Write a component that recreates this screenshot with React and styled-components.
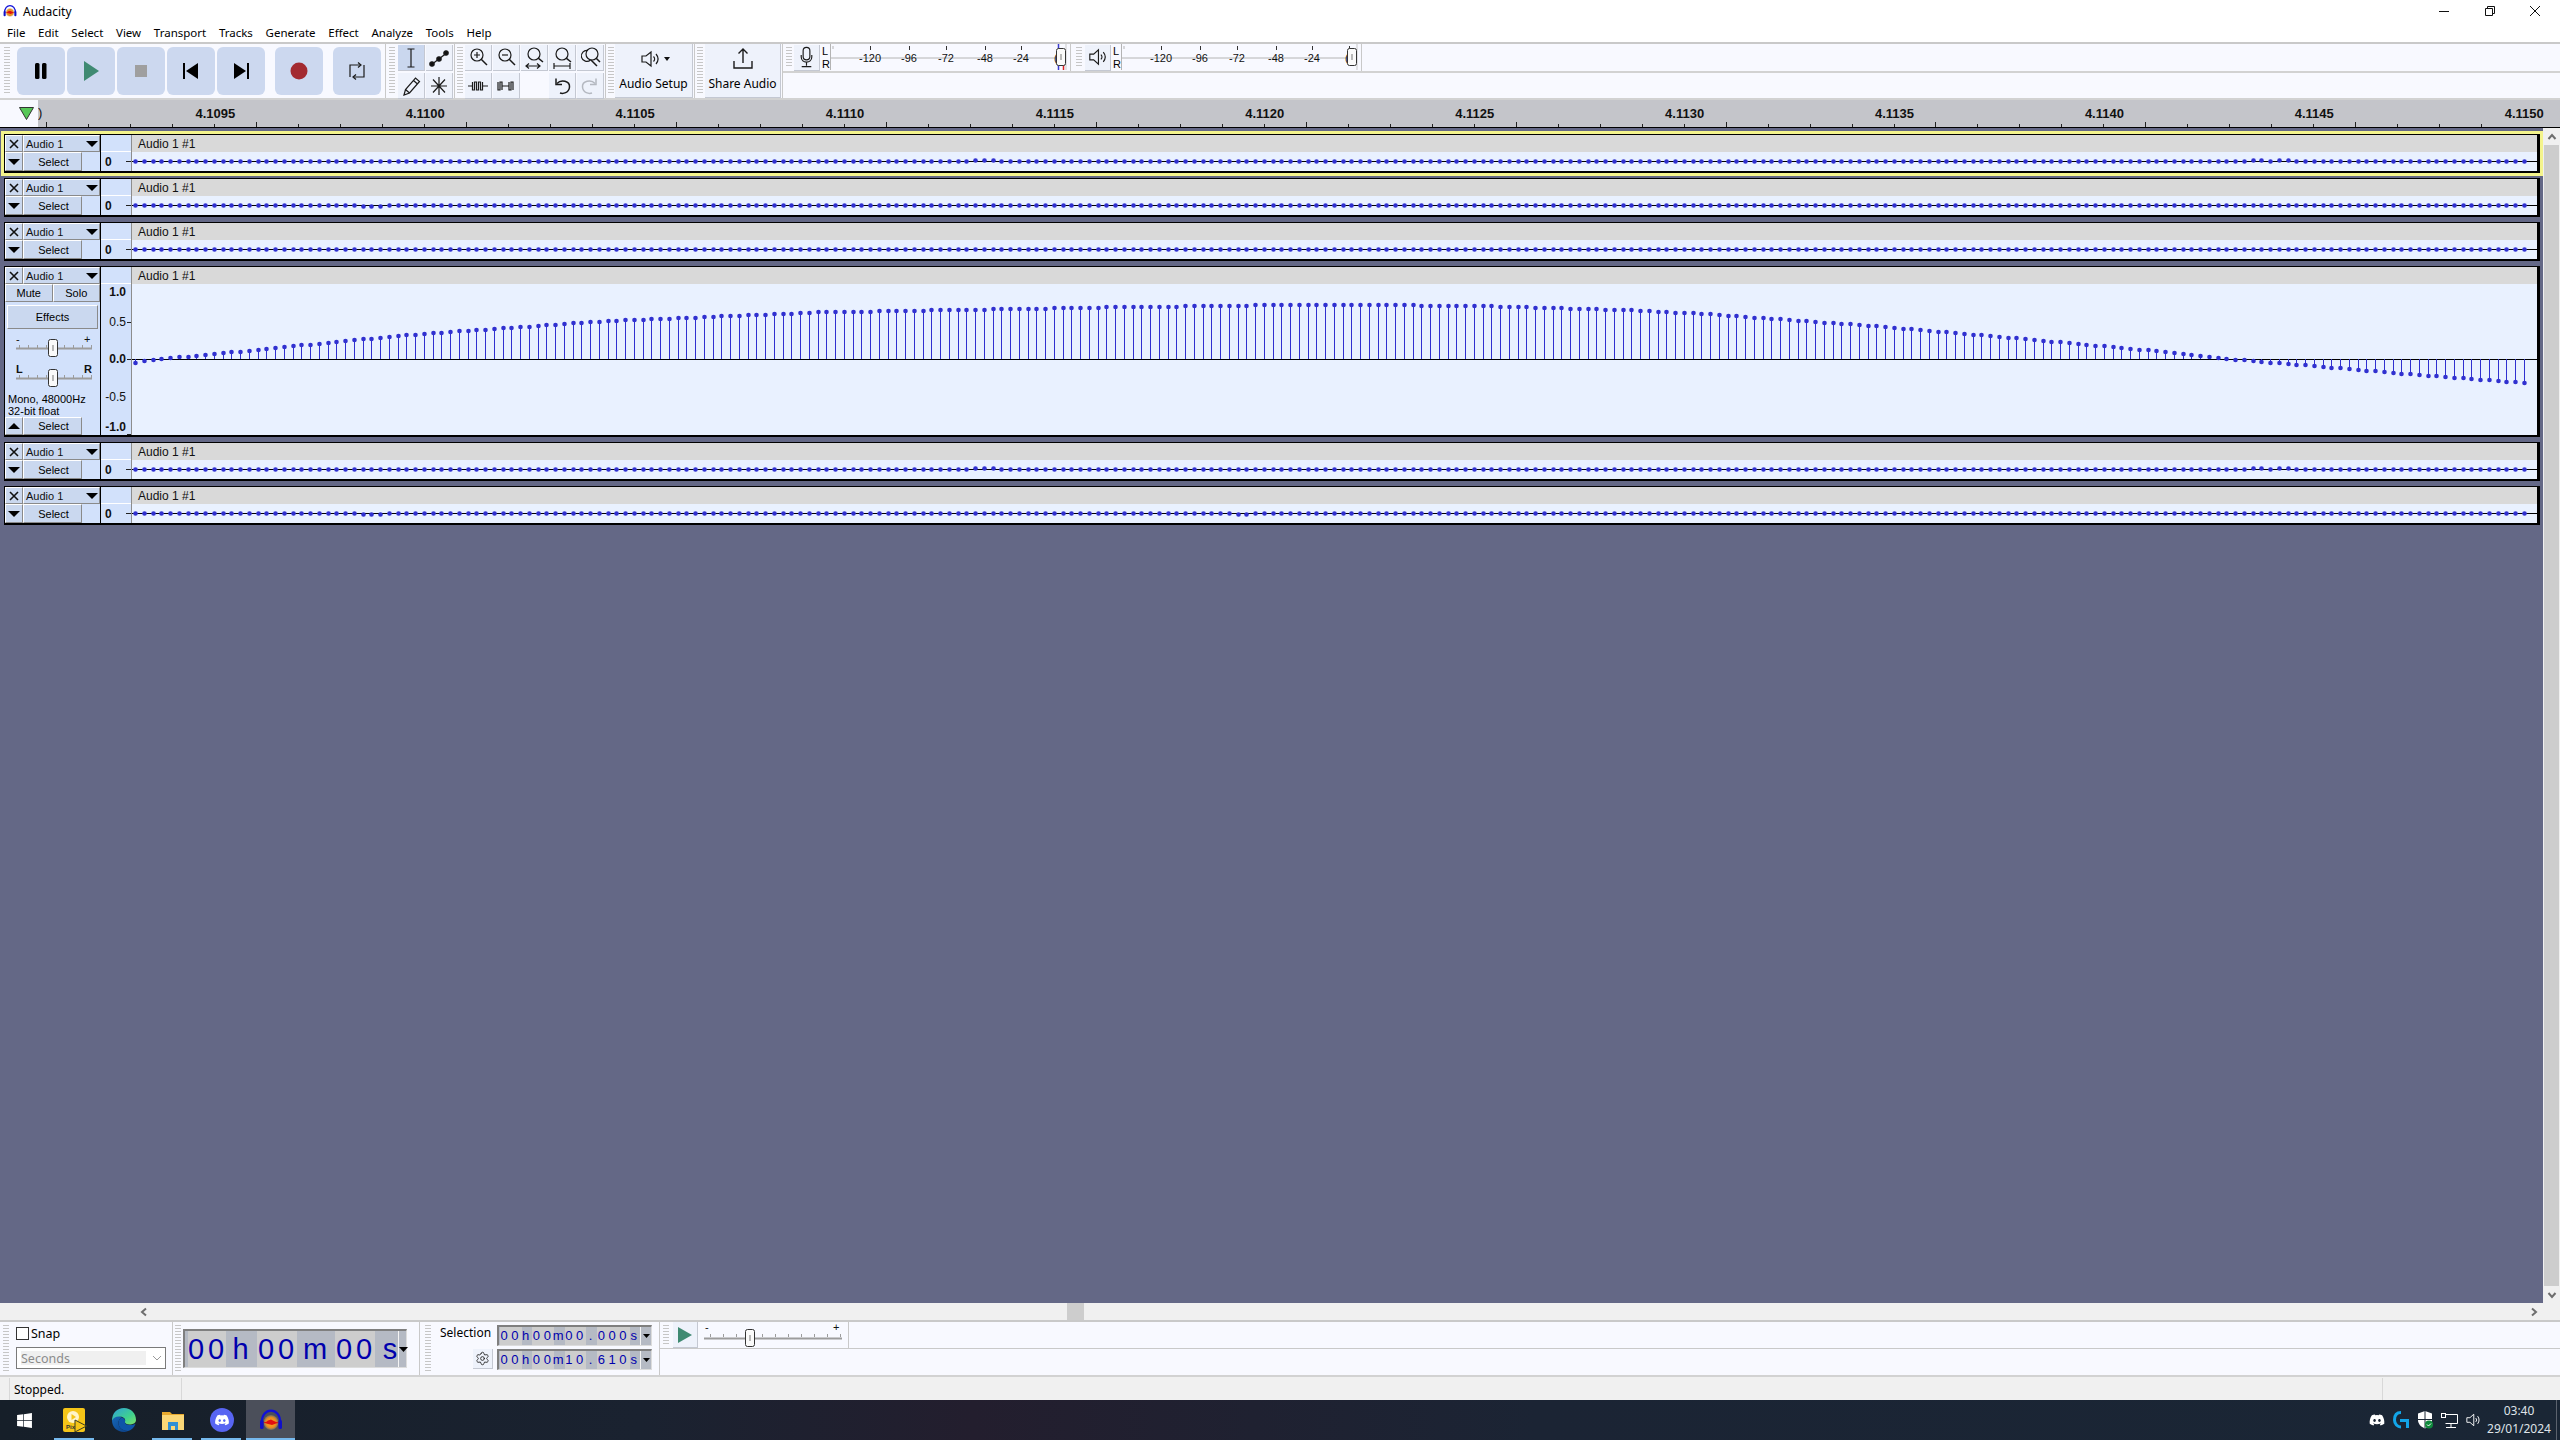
import React from "react";
import styled, { createGlobalStyle, css } from "styled-components";
import { FaDiscord, FaWindows } from "react-icons/fa";
import { Settings } from "lucide-react";

const UI_FONT = `"Noto Sans", "Open Sans", sans-serif`;
const PANEL_FONT = `"Liberation Sans", Arial, sans-serif`;
const DOCK_BG = "#f8f9ff";
const LINE = "#c9c9c9";

/* waveform: sample spacing is 8.75px, amplitude is read off the reference */
const FIRST_SAMPLE = 135;
const SAMPLE_STEP = 8.75;
const SAMPLE_COUNT = 274;
const WAVE_LEFT = 132;
const CURVE = [
  [135, -3], [158, 0], [240, 8], [330, 17], [415, 25], [600, 38], [816, 47],
  [1104, 52], [1330, 55], [1500, 53], [1636, 49], [1712, 45], [1865, 34],
  [2018, 21], [2171, 7], [2232, 0], [2294, -5], [2400, -14], [2530, -24],
];

function ampAt(x) {
  for (let i = 1; i < CURVE.length; i++) {
    if (x <= CURVE[i][0]) {
      const [x0, y0] = CURVE[i - 1];
      const [x1, y1] = CURVE[i];
      return y0 + ((y1 - y0) * (x - x0)) / (x1 - x0);
    }
  }
  return CURVE[CURVE.length - 1][1];
}

const SAMPLES = Array.from({ length: SAMPLE_COUNT }, (_, i) => FIRST_SAMPLE + i * SAMPLE_STEP);

const TRACKS = [
  { id: 1, selected: true, bumps: [[975, 1000, -1], [2248, 2262, -1], [2275, 2290, -1]] },
  { id: 2, bumps: [[360, 385, 1]] },
  { id: 3, bumps: [] },
  { id: 4, expanded: true },
  { id: 5, bumps: [[975, 1000, -1], [2248, 2262, -1], [2275, 2290, -1]] },
  { id: 6, bumps: [[360, 385, 1], [1230, 1250, 1]] },
];

const RULER_LABELS = ["4.1095", "4.1100", "4.1105", "4.1110", "4.1115", "4.1120", "4.1125", "4.1130", "4.1135", "4.1140", "4.1145", "4.1150"];

const MENUS = ["File", "Edit", "Select", "View", "Transport", "Tracks", "Generate", "Effect", "Analyze", "Tools", "Help"];

const BIG_TIME = [
  { text: "00", width: 38, light: true }, { text: "h", width: 31 },
  { text: "00", width: 40, light: true }, { text: "m", width: 38 },
  { text: "00", width: 40, light: true }, { text: "s", width: 23, shift: 9 },
];

const smallTime = (sec, frac) => [
  { text: "00", width: 21.6, light: true }, { text: "h", width: 10.8 },
  { text: "00", width: 21.6, light: true }, { text: "m", width: 10.8 },
  { text: sec, width: 21.6, light: true }, { text: ".", width: 10.8 },
  { text: frac, width: 32.4, light: true }, { text: "s", width: 10.8 },
];

const GlobalStyle = createGlobalStyle`
  html, body { margin: 0; padding: 0; background: #fff; }
  #root { width: 2560px; height: 1440px; }
`;

const Window = styled.div`
  width: 2560px;
  height: 1440px;
  display: flex;
  flex-direction: column;
  overflow: hidden;
  font-family: ${UI_FONT};
  color: #000;
`;

/* ---------- title + menu ---------- */
const TitleBar = styled.div`
  height: 22px;
  display: flex;
  align-items: center;
  padding: 0 2px 0 3px;
  background: #fff;
  font-size: 12px;
`;
const TitleText = styled.span`
  margin-left: 6px;
  flex: 1;
`;
const WinButton = styled.div`
  width: 45.5px;
  height: 22px;
  display: flex;
  align-items: center;
  justify-content: center;
`;
const MenuBar = styled.div`
  height: 20px;
  display: flex;
  align-items: center;
  padding-left: 7px;
  gap: 12.7px;
  background: #fff;
  font-size: 11.5px;
`;

/* ---------- top dock ---------- */
const Dock = styled.div`
  height: 58px;
  box-sizing: border-box;
  display: flex;
  background: ${DOCK_BG};
  border-top: 2px solid ${LINE};
  border-bottom: 2px solid #d2d2d2;
`;
const Section = styled.div`
  display: flex;
  align-items: ${(p) => p.$align || "center"};
  width: ${(p) => p.$width}px;
  box-sizing: border-box;
  padding-left: ${(p) => p.$pad ?? 2}px;
  border-right: 1px solid ${LINE};
`;
const Gripper = styled.div`
  width: 6px;
  flex: none;
  align-self: stretch;
  margin: 3px ${(p) => p.$after ?? 3}px 3px 0;
  background: repeating-linear-gradient(to bottom, #c6c6c6 0 1px, transparent 1px 3px);
`;
const TransportRow = styled.div`
  display: flex;
  gap: 2px;
`;
const TransportButton = styled.div`
  width: 48px;
  height: 48px;
  border-radius: 6px;
  background: #ccd8ef;
  display: flex;
  align-items: center;
  justify-content: center;
  margin-left: ${(p) => p.$gap || 0}px;
`;
const ToolGrid = styled.div`
  display: grid;
  grid-template-columns: repeat(${(p) => p.$cols}, 27px);
  grid-auto-rows: 26px;
  gap: 2px 1px;
  margin-top: 2px;
`;
const toolFace = css`
  box-sizing: border-box;
  background: #eef2fb;
  border-right: 1px solid #c4c8d2;
  border-bottom: 1px solid #c4c8d2;
  display: flex;
  align-items: center;
  justify-content: center;
`;
const ToolButton = styled.div`
  ${toolFace}
  ${(p) => p.$on && `background: #cad7ee;`}
  ${(p) => p.$blank && `background: transparent; border: none;`}
`;
const BigButton = styled.div`
  ${toolFace}
  width: ${(p) => p.$width}px;
  height: 54px;
  flex-direction: column;
  justify-content: flex-start;
  font-size: 12px;
  line-height: 16px;
  svg { margin-top: 2px; margin-bottom: 4px; }
`;
const RightDock = styled.div`
  flex: 1;
  display: flex;
  flex-direction: column;
`;
const MeterRow = styled.div`
  height: 27px;
  display: flex;
  border-bottom: 2px solid #d2d2d2;
  box-sizing: content-box;
`;
const MeterButton = styled(ToolButton)`
  width: 26px;
  height: 26px;
  flex: none;
`;
const ChannelLabels = styled.div`
  width: 11px;
  margin-left: 1px;
  display: flex;
  flex-direction: column;
  font: 11px/13px ${PANEL_FONT};
  padding-left: 1px;
  box-sizing: border-box;
`;
const Drawing = styled.svg`
  display: block;
  flex: none;
  text {
    font-family: ${PANEL_FONT};
    font-size: ${(p) => p.$text || 11}px;
  }
`;

/* ---------- ruler ---------- */
const Ruler = styled.div`
  height: 28px;
  box-sizing: border-box;
  display: flex;
  background: #c4c5ca;
  border-bottom: 1px solid #000;
`;
const RulerHead = styled.div`
  width: 38px;
  flex: none;
  background: ${DOCK_BG};
  display: flex;
  align-items: flex-start;
  padding: 7px 0 0 19px;
  box-sizing: border-box;
`;
const RulerAxis = styled(Drawing)`
  text {
    font-weight: 700;
    font-size: 13px;
  }
`;

/* ---------- tracks ---------- */
const TrackArea = styled.div`
  flex: 1;
  display: flex;
  min-height: 0;
  background: #646886;
`;
const TrackList = styled.div`
  flex: 1;
  display: flex;
  flex-direction: column;
  gap: 5px;
  padding: 6px 3px 0 4px;
`;
const TrackFrame = styled.div`
  height: ${(p) => (p.$expanded ? 171 : 39)}px;
  box-sizing: border-box;
  border-style: solid;
  border-color: #000;
  border-width: 1px 3px 2px 1px;
  display: grid;
  grid-template-columns: 96px 31px 1fr;
  flex: none;
  ${(p) => p.$selected && `box-shadow: 0 0 0 3px #f4f48c;`}
`;
const Panel = styled.div`
  display: flex;
  flex-direction: column;
  background: #d2e1fb;
  border-right: 1px solid #000;
  font: 11px ${PANEL_FONT};
`;
const PanelRow = styled.div`
  display: flex;
  height: ${(p) => p.$h}px;
  flex: none;
`;
const bevel = css`
  box-sizing: border-box;
  background: #cad8ef;
  border: 1px solid;
  border-color: #fff #8a8a8a #8a8a8a #fff;
  display: flex;
  align-items: center;
  justify-content: center;
`;
const SquareButton = styled.div`
  ${bevel}
  width: 18px;
`;
const NameButton = styled.div`
  ${bevel}
  flex: 1;
  justify-content: space-between;
  padding: 0 1px 0 2px;
  color: #111;
`;
const SelectButton = styled.div`
  ${bevel}
  width: 59px;
  padding-left: 2px;
`;
const HalfButton = styled.div`
  ${bevel}
  flex: 1;
`;
const EffectsButton = styled.div`
  ${bevel}
  height: 24px;
  margin: 3px 2px 4px;
`;
const Info = styled.div`
  height: 24px;
  flex: none;
  padding-left: 3px;
  line-height: 12px;
`;
const Grow = styled.div`
  flex: 1;
`;
const ScaleColumn = styled.div`
  display: flex;
  flex-direction: column;
  background: #d2e1fb;
  border-right: 1px solid #8d8d8d;
`;
const ScaleTop = styled.div`
  height: 17px;
  flex: none;
  box-sizing: border-box;
  border-bottom: 1px solid #fff;
`;
const WaveColumn = styled.div`
  display: flex;
  flex-direction: column;
  background: #e9f1ff;
  min-width: 0;
`;
const ClipName = styled.div`
  height: 17px;
  flex: none;
  background: #d9d9d9;
  font: 12px/19px ${PANEL_FONT};
  padding-left: 6px;
  color: #111;
`;

/* ---------- scrollbars ---------- */
const VScroll = styled.div`
  width: 17px;
  flex: none;
  background: #f0f0f0;
  display: flex;
  flex-direction: column;
  align-items: center;
`;
const ArrowSlot = styled.div`
  height: 17px;
  display: flex;
  align-items: center;
  justify-content: center;
  flex: none;
`;
const VThumb = styled.div`
  flex: 1;
  width: 15px;
  background: #cdcdcd;
`;
const HScroll = styled.div`
  height: 17px;
  flex: none;
  background: #f0f0f0;
  display: flex;
  align-items: center;
  padding: 0 21px 0 139px;
`;
const HThumb = styled.div`
  width: 17px;
  height: 17px;
  background: #cdcdcd;
  margin: 0 auto 0 918px;
`;

/* ---------- bottom dock ---------- */
const BottomDock = styled.div`
  height: 57px;
  flex: none;
  box-sizing: border-box;
  display: flex;
  background: ${DOCK_BG};
  border-top: 2px solid ${LINE};
  border-bottom: 2px solid #d2d2d2;
`;
const SnapColumn = styled.div`
  flex: 1;
  display: flex;
  flex-direction: column;
  padding-left: 7px;
  gap: 7px;
  font-size: 12.5px;
`;
const SnapLine = styled.label`
  display: flex;
  align-items: center;
  height: 13px;
  margin-top: 5px;
  gap: 2px;
`;
const CheckBox = styled.span`
  width: 13px;
  height: 13px;
  box-sizing: border-box;
  background: #fff;
  border: 1px solid #333;
`;
const SelectBox = styled.div`
  width: 150px;
  height: 22px;
  box-sizing: border-box;
  background: #fff;
  border: 1px solid #7a7a7a;
  padding: 3px 0 3px 4px;
  display: flex;
  align-items: center;
  gap: 5px;
`;
const SelectValue = styled.div`
  width: 125px;
  height: 100%;
  background: #f0f0f0;
  color: #8b8b8b;
  font-size: 12.5px;
  line-height: 15px;
`;
const TimeField = styled.div`
  box-sizing: border-box;
  display: flex;
  width: ${(p) => p.$width}px;
  height: ${(p) => p.$height}px;
  background: #b5bac4;
  padding-left: ${(p) => p.$inset}px;
  border-style: solid;
  border-width: 2px 1px 1px 2px;
  border-color: #7f7f7f #dcdcdc #dcdcdc #7f7f7f;
  color: #0000ad;
  font-family: ${PANEL_FONT};
  font-size: ${(p) => p.$size}px;
  letter-spacing: ${(p) => p.$track}px;
`;
const TimeSegment = styled.span`
  flex: none;
  box-sizing: border-box;
  display: flex;
  align-items: center;
  justify-content: center;
  width: ${(p) => p.$width}px;
  padding-left: ${(p) => p.$shift || 0}px;
  background: ${(p) => (p.$light ? "#cdcdcd" : "transparent")};
  text-indent: ${(p) => p.$indent}px;
`;
const TimeDrop = styled.span`
  flex: 1;
  border-left: 1px solid #f4f4f4;
  display: flex;
  align-items: center;
  justify-content: center;
`;
const SelectionGrid = styled.div`
  display: grid;
  grid-template-columns: 58px auto;
  justify-items: end;
  align-items: center;
  row-gap: 3px;
  margin-bottom: 3px;
  font-size: 12px;
`;
const SelectionLabel = styled.span`
  justify-self: start;
  align-self: start;
  margin: -1px 0 0 1px;
`;
const GearButton = styled.div`
  ${toolFace}
  width: 20px;
  height: 20px;
  margin-right: 4px;
`;
const RightBottom = styled.div`
  flex: 1;
  display: flex;
  flex-direction: column;
`;
const SpeedRow = styled.div`
  height: 26px;
  display: flex;
  box-sizing: content-box;
  border-bottom: 1px solid ${LINE};
`;
const SpeedPlay = styled(ToolButton)`
  width: 25px;
  height: 26px;
  margin-right: 6px;
`;

/* ---------- status + taskbar ---------- */
const StatusBar = styled.div`
  height: 23px;
  flex: none;
  background: #f0f0f0;
  display: flex;
  font-size: 12px;
  line-height: 23px;
  padding-left: 9px;
`;
const StatusCell = styled.div`
  box-sizing: border-box;
  border-left: 1px solid #d8d8d8;
  padding-left: 4px;
  width: ${(p) => p.$width}px;
  margin: 1px 0 0;
`;
const Taskbar = styled.div`
  height: 40px;
  flex: none;
  display: flex;
  align-items: stretch;
  background: linear-gradient(90deg, #161f29 0%, #1a2230 25%, #231e2e 38%, #1b2434 60%, #1a2635 100%);
`;
const StartButton = styled.div`
  width: 50px;
  padding-right: 2px;
  box-sizing: border-box;
  display: flex;
  align-items: center;
  justify-content: center;
  color: #fff;
`;
const TaskButton = styled.div`
  width: 49px;
  position: relative;
  display: flex;
  align-items: center;
  justify-content: center;
  ${(p) => p.$active && `background: #4b4f5a;`}
  ${(p) =>
    p.$running &&
    css`
      &::after {
        content: "";
        position: absolute;
        bottom: 0;
        height: 2px;
        left: ${p.$active ? 0 : 4}px;
        right: ${p.$active ? 0 : 5}px;
        background: #76b9ed;
      }
    `}
`;
const Tray = styled.div`
  margin-left: auto;
  display: flex;
  align-items: center;
  padding-right: 3px;
`;
const TrayIcon = styled.div`
  width: 24px;
  display: flex;
  align-items: center;
  justify-content: center;
  color: #fff;
`;
const Clock = styled.div`
  width: 68px;
  text-align: center;
  color: #dfe3e8;
  font-size: 12px;
  line-height: 18px;
`;
const DesktopEdge = styled.div`
  width: 1px;
  height: 40px;
  background: #5b626d;
  margin-left: 3px;
`;

/* ---------- drawings ---------- */
function Ink({ size = 26, w, h, children, fill = "none", stroke = "#1a1a1a", sw = 1.2, vb }) {
  return (
    <svg
      width={w || size}
      height={h || size}
      viewBox={vb || `0 0 ${w || size} ${h || size}`}
      fill={fill}
      stroke={stroke}
      strokeWidth={sw}
    >
      {children}
    </svg>
  );
}

function AudacityLogo({ size }) {
  return (
    <svg width={size} height={size} viewBox="0 0 24 24">
      <defs>
        <radialGradient id={`aud${size}`} cx="50%" cy="50%" r="50%">
          <stop offset="0%" stopColor="#ffb020" />
          <stop offset="70%" stopColor="#e88a20" />
          <stop offset="100%" stopColor="#c0a060" stopOpacity="0.3" />
        </radialGradient>
      </defs>
      <ellipse cx="12" cy="14.5" rx="7.5" ry="7.5" fill={`url(#aud${size})`} />
      <path d="M3 14 L7 14 L9 12.5 L12 11.5 L15 13 L17 14 L21 14.5 L17 15.5 L13 17 L9 16 Z" fill="#e01010" />
      <path d="M2.8 15 C2.2 -1.5 21.8 -1.5 21.2 15" fill="none" stroke="#1010d8" strokeWidth="2.2" />
      <rect x="1" y="12" width="3.6" height="9" rx="1.6" fill="#1010c8" />
      <rect x="19.4" y="12" width="3.6" height="9" rx="1.6" fill="#1010c8" />
    </svg>
  );
}

function LoopIcon() {
  return (
    <Ink size={26}>
      <path d="M6 19 V7 H16" />
      <path d="M14 4.5 L17 7 L14 9.5" />
      <path d="M20 7 V19 H10" />
      <path d="M12 16.5 L9 19 L12 21.5" />
    </Ink>
  );
}

const Magnifier = ({ cx = 12, cy = 10, r = 6, ex = 22, ey = 20 }) => (
  <>
    <circle cx={cx} cy={cy} r={r} />
    <path d={`M${cx + r * 0.7} ${cy + r * 0.7} L${ex} ${ey}`} strokeWidth="1.5" />
  </>
);

const TOOL_ICONS = {
  select: (
    <Ink>
      <path d="M9.5 4 H16.5 M13 4 V22 M9.5 22 H16.5" />
    </Ink>
  ),
  envelope: (
    <Ink>
      <path d="M5 20 L22 7" />
      <circle cx="6" cy="19" r="2.2" fill="#111" />
      <circle cx="13" cy="14" r="2.2" fill="#111" />
      <circle cx="20" cy="8" r="2.2" fill="#111" />
    </Ink>
  ),
  draw: (
    <Ink>
      <path d="M6 22 L7.5 16.5 L17.5 5 L21.5 8.5 L11.5 20 Z M7.5 16.5 L11.5 20 M15.5 7.5 L19.5 11" />
    </Ink>
  ),
  multi: (
    <Ink>
      <path d="M13 4 V22 M5 13 H21 M7 6.5 L19 19.5 M19 6.5 L7 19.5" />
    </Ink>
  ),
  zoomIn: (
    <Ink>
      <Magnifier />
      <path d="M9 10 H15 M12 7 V13" />
    </Ink>
  ),
  zoomOut: (
    <Ink>
      <Magnifier />
      <path d="M9 10 H15" />
    </Ink>
  ),
  zoomSel: (
    <Ink>
      <Magnifier cx={13} cy={9} ex={22} ey={17} />
      <path d="M5 21 H19 M8 18.5 L5 21 L8 23.5 M16 18.5 L19 21 L16 23.5" />
    </Ink>
  ),
  zoomFit: (
    <Ink>
      <Magnifier cx={13} cy={9} ex={22} ey={17} />
      <path d="M5 21 H21 M5 18 V24 M21 18 V24" />
    </Ink>
  ),
  zoomToggle: (
    <Ink>
      <Magnifier cx={15} cy={9} ex={23} ey={17} />
      <path d="M11 5.5 A5.5 5.5 0 1 0 13.5 15" />
      <path d="M14 15 L20 21" strokeWidth="1.5" />
    </Ink>
  ),
  trim: (
    <Ink>
      <path d="M3 13 H7 M7.5 9 V17 H9.5 V9 H11.5 V17 H13.5 V9 H15.5 V17 H17.5 V9 M18 13 H23" />
    </Ink>
  ),
  silence: (
    <Ink>
      <path d="M5 9 V17 H7 V9 H9 V17 M9 13 H16 M16 9 V17 H18 V9 H20 V17" />
    </Ink>
  ),
  undo: (
    <Ink sw={1.5}>
      <path d="M8 10.5 C12 6 21 8 20.5 14 C20 20 14 21 11 20" />
      <path d="M7 5.5 V11.5 H13" />
    </Ink>
  ),
  redo: (
    <Ink stroke="#b4b8c0" sw={1.5}>
      <path d="M18 10.5 C14 6 5 8 5.5 14 C6 20 12 21 15 20" />
      <path d="M19 5.5 V11.5 H13" />
    </Ink>
  ),
};

function SpeakerIcon({ size = 26, dark }) {
  return (
    <Ink size={size} vb="0 0 26 26">
      <path d="M5 10 H9 L14 5.5 V20.5 L9 16 H5 Z" stroke={dark || "#1a1a1a"} />
      <path d="M16.5 10.5 C18 12 18 14 16.5 15.5 M19 8 C21.5 11 21.5 15 19 18" stroke={dark || "#1a1a1a"} />
    </Ink>
  );
}

function MicIcon() {
  return (
    <Ink size={26}>
      <rect x="9.5" y="3" width="7" height="13" rx="3.5" />
      <path d="M7.5 11 V13 C7.5 20 18.5 20 18.5 13 V11 M13 19 V22 M8 23 H18" />
    </Ink>
  );
}

function MeterScale({ peak }) {
  const ticks = [
    { x: 40, label: "-120" },
    { x: 79, label: "-96" },
    { x: 116, label: "-72" },
    { x: 155, label: "-48" },
    { x: 191, label: "-24" },
  ];
  return (
    <Drawing width={240} height={27} viewBox="0 0 240 27">
      <path d="M0.5 0 V26 M0.5 14 H229 M3 2 V5" stroke="#b4b4b4" fill="none" />
      {ticks.map((t) => (
        <g key={t.label}>
          <path d={`M${t.x + 0.5} 2 V6`} stroke="#333" />
          <text x={t.x} y="18" textAnchor="middle" fill="#111">{t.label}</text>
        </g>
      ))}
      <path d="M228.5 2 V5" stroke="#333" />
      <text x="224" y="18" fill="#111">(</text>
      {peak && <path d="M228.5 0 V4 M228.5 21 V26" stroke="#3a3ad0" strokeWidth="1.5" />}
      {peak && <path d="M233.5 21 V26" stroke="#e02020" strokeWidth="1.5" />}
      <path d="M236 0 V26" stroke="#c9c9c9" />
      <rect x="226.5" y="4.5" width="9" height="17" rx="2" fill="#fafafa" stroke="#333" />
      <path d="M231 10 V16" stroke="#777" />
    </Drawing>
  );
}

function RulerScale() {
  const major = 214.3;
  const step = 41.98;
  const minor = Array.from({ length: 60 }, (_, i) => 4.4 + i * step).filter((x) => x >= 38 && x < 2560);
  return (
    <RulerAxis width={2522} height={27} viewBox="38 0 2522 27">
      <text x="38" y="17" style={{ fontWeight: 400 }} fill="#111">)</text>
      {minor.map((x, i) => (
        <path key={i} d={`M${Math.round(x) + 0.5} ${i % 5 === 0 ? 22 : 24} V27`} stroke="#222" />
      ))}
      {RULER_LABELS.map((l, i) => (
        <text key={l} x={major + i * step * 5 + 1} y="18" textAnchor="middle" fill="#111">{l}</text>
      ))}
    </RulerAxis>
  );
}

const DOT = "#3030d0";

function MiniWave({ bumps }) {
  const shift = (x) => {
    const b = bumps.find(([a, c]) => x >= a && x <= c);
    return b ? b[2] : 0;
  };
  return (
    <Drawing width={2406} height={19} viewBox={`${WAVE_LEFT} 0 2406 19`}>
      <rect x={WAVE_LEFT} y="9" width="2406" height="1" fill="#000" />
      {SAMPLES.map((x) => (
        <circle key={x} cx={Math.round(x) + 0.5} cy={9.5 + shift(x)} r="2.3" fill={DOT} />
      ))}
    </Drawing>
  );
}

function BigWave() {
  return (
    <Drawing width={2406} height={151} viewBox={`${WAVE_LEFT} 0 2406 151`}>
      <rect x={WAVE_LEFT} y="75" width="2406" height="1" fill="#000" />
      {SAMPLES.map((x) => {
        const px = Math.round(x);
        const y = Math.round(75.5 - ampAt(x));
        return (
          <g key={x}>
            <rect x={px} y={Math.min(y, 75)} width="1" height={Math.abs(y - 75)} fill={DOT} />
            <circle cx={px + 0.5} cy={y} r="2.3" fill={DOT} />
          </g>
        );
      })}
    </Drawing>
  );
}

function MiniScale() {
  return (
    <Drawing width={30} height={19} viewBox="0 0 30 19" $text={12}>
      <text x="4" y="14" fontWeight="700" fill="#111">0</text>
      <path d="M25 9.5 H30" stroke="#222" />
    </Drawing>
  );
}

function BigScale() {
  const rows = [
    { y: 12, label: "1.0", bold: true },
    { y: 42, label: "0.5", tick: 38 },
    { y: 79, label: "0.0", bold: true, tick: 75 },
    { y: 117, label: "-0.5" },
    { y: 147, label: "-1.0", bold: true, tick: 150 },
  ];
  return (
    <Drawing width={30} height={151} viewBox="0 0 30 151" $text={12}>
      {rows.map((r) => (
        <g key={r.label}>
          <text x="25" y={r.y} textAnchor="end" fontWeight={r.bold ? 700 : 400} fill="#111">{r.label}</text>
          {r.tick !== undefined && <path d={`M26 ${r.tick + 0.5} H30`} stroke="#222" />}
        </g>
      ))}
    </Drawing>
  );
}

function Slider({ left, right, thumb, width = 95, labelSize = 11, bold }) {
  const ticks = Array.from({ length: 9 }, (_, i) => 14 + i * 9);
  return (
    <Drawing width={width} height={30} viewBox={`0 0 ${width} 30`} $text={labelSize}>
      <text x="11" y="10" fontWeight={bold ? 700 : 400} fill="#111">{left}</text>
      <text x="79" y="10" fontWeight={bold ? 700 : 400} fill="#111">{right}</text>
      <path d="M11 15.5 H87" stroke="#9c9c9c" strokeWidth="2" />
      {ticks.map((x) => (
        <path key={x} d={`M${x + 0.5} 12 V15`} stroke="#9c9c9c" />
      ))}
      <rect x={thumb - 4.5} y="6.5" width="9" height="17" rx="2" fill="#fafafa" stroke="#333" />
      <path d={`M${thumb} 12 V18`} stroke="#777" />
    </Drawing>
  );
}

function SpeedSlider() {
  const ticks = Array.from({ length: 11 }, (_, i) => 6 + i * 13);
  return (
    <Drawing width={140} height={26} viewBox="0 0 140 26" $text={11}>
      <text x="1" y="9" fill="#111">-</text>
      <text x="129" y="9" fill="#111">+</text>
      <path d="M0 16.5 H138" stroke="#9c9c9c" strokeWidth="2" />
      {ticks.map((x) => (
        <path key={x} d={`M${x + 0.5} 12 V15`} stroke="#9c9c9c" />
      ))}
      <rect x="41.5" y="7.5" width="9" height="17" rx="2" fill="#fafafa" stroke="#333" />
      <path d="M46 13 V19" stroke="#777" />
    </Drawing>
  );
}

const Caret = ({ up, w = 15, h = 7, color = "#000" }) => (
  <svg width={w} height={h} viewBox={`0 0 ${w} ${h}`}>
    <path d={up ? `M0 ${h} L${w / 2} 0 L${w} ${h} Z` : `M0 0 L${w} 0 L${w / 2} ${h} Z`} fill={color} />
  </svg>
);

const Close = () => (
  <Ink size={10} stroke="#111" sw={1.6}>
    <path d="M1 1 L9 9 M9 1 L1 9" />
  </Ink>
);

const Chevron = ({ d }) => (
  <Ink size={10} stroke="#6e6e6e" sw={2}>
    <path d={d} />
  </Ink>
);

function Track({ track }) {
  const { expanded, selected, bumps } = track;
  return (
    <TrackFrame $expanded={expanded} $selected={selected}>
      <Panel>
        <PanelRow $h={17}>
          <SquareButton><Close /></SquareButton>
          <NameButton>
            Audio 1
            <Caret w={12} h={6} />
          </NameButton>
        </PanelRow>
        {expanded && (
          <>
            <PanelRow $h={18}>
              <HalfButton>Mute</HalfButton>
              <HalfButton>Solo</HalfButton>
            </PanelRow>
            <EffectsButton>Effects</EffectsButton>
            <Slider left="-" right="+" thumb={48} />
            <Slider left="L" right="R" thumb={48} bold />
            <Info>
              Mono, 48000Hz
              <br />
              32-bit float
            </Info>
          </>
        )}
        <Grow />
        <PanelRow $h={expanded ? 18 : 19}>
          <SquareButton><Caret up={expanded} w={12} h={6} /></SquareButton>
          <SelectButton>Select</SelectButton>
        </PanelRow>
      </Panel>
      <ScaleColumn>
        <ScaleTop />
        {expanded ? <BigScale /> : <MiniScale />}
      </ScaleColumn>
      <WaveColumn>
        <ClipName>Audio 1 #1</ClipName>
        {expanded ? <BigWave /> : <MiniWave bumps={bumps} />}
      </WaveColumn>
    </TrackFrame>
  );
}

function Time({ segments, width, height, size, track, inset, indent, drop }) {
  return (
    <TimeField $width={width} $height={height} $size={size} $track={track} $inset={inset}>
      {segments.map((s, i) => (
        <TimeSegment key={i} $width={s.width} $light={s.light} $indent={indent} $shift={s.shift}>{s.text}</TimeSegment>
      ))}
      <TimeDrop><Caret w={drop} h={Math.round(drop * 0.6)} /></TimeDrop>
    </TimeField>
  );
}

function EdgeLogo() {
  return (
    <svg width="24" height="24" viewBox="0 0 24 24">
      <defs>
        <linearGradient id="edgeTop" x1="0" y1="0" x2="1" y2="1">
          <stop offset="0%" stopColor="#2f9fd8" />
          <stop offset="60%" stopColor="#3fd18f" />
          <stop offset="100%" stopColor="#7ee06a" />
        </linearGradient>
        <linearGradient id="edgeLow" x1="0" y1="0" x2="1" y2="1">
          <stop offset="0%" stopColor="#1667b8" />
          <stop offset="100%" stopColor="#0b3f86" />
        </linearGradient>
      </defs>
      <path d="M12 0 C19 0 24 5 24 12 C24 15 21 16.5 17.5 16.5 C14 16.5 12.5 15 13 13.5 C14 11 11 8 7 9 C3.5 10 0.5 13 0 13 C0 5 5 0 12 0 Z" fill="url(#edgeTop)" />
      <path d="M0 12.5 C2 8.5 7 7.5 10 9.5 C7.5 10.5 6 13 6.5 16 C7 20 11 23 16 23 C14.5 23.8 13 24 12 24 C5 24 0 19 0 12.5 Z" fill="url(#edgeLow)" />
      <path d="M10 9.5 C12.5 10.5 13.5 12 13 13.5 C12.5 15.5 14.5 17 18 17 C20 17 22 16.5 23.5 16 C22 20 19 22.5 16 23 C11 23 7 20 6.5 16 C6 13 7.5 10.5 10 9.5 Z" fill="#0f55a8" />
    </svg>
  );
}

function PlexLogo() {
  return (
    <svg width="24" height="24" viewBox="0 0 24 24">
      <rect x="0" y="0" width="22" height="24" rx="2" fill="#f5c518" />
      <circle cx="10" cy="9" r="6" fill="#fff4c8" />
      <path d="M8.5 6 L13 9 L8.5 12 Z" fill="#f5c518" />
      <text x="3" y="21" fontSize="6" fontWeight="700" fontFamily="Liberation Sans" fill="#333">Pix</text>
      <path d="M12 12 L23.5 18 L12 24 Z" fill="#f5c518" stroke="#3a3a20" strokeWidth="1" />
    </svg>
  );
}

function FolderLogo() {
  return (
    <svg width="22" height="20" viewBox="0 0 22 20">
      <path d="M0 2 H8 L10 4 H22 V20 H0 Z" fill="#e8a92e" />
      <rect x="0" y="5" width="22" height="15" fill="#fbd777" />
      <rect x="6" y="12" width="10" height="8" fill="#2f8fd4" />
      <rect x="9" y="16" width="4" height="4" fill="#fbd777" />
    </svg>
  );
}

export default function App() {
  return (
    <Window>
      <GlobalStyle />
      <TitleBar>
        <AudacityLogo size={14} />
        <TitleText>Audacity</TitleText>
        <WinButton>
          <Ink size={12} sw={1} stroke="#111"><path d="M1 6.5 H11" /></Ink>
        </WinButton>
        <WinButton>
          <Ink size={12} sw={1} stroke="#111">
            <path d="M3.5 3.5 V1.5 H10.5 V8.5 H8.5 M1.5 3.5 H8.5 V10.5 H1.5 Z" />
          </Ink>
        </WinButton>
        <WinButton>
          <Ink size={12} sw={1} stroke="#111"><path d="M1 1 L11 11 M11 1 L1 11" /></Ink>
        </WinButton>
      </TitleBar>
      <MenuBar>
        {MENUS.map((m) => (
          <span key={m}>{m}</span>
        ))}
      </MenuBar>

      <Dock>
        <Section $width={386} $pad={4}>
          <Gripper $after={7} />
          <TransportRow>
            <TransportButton>
              <Ink size={20} stroke="none" fill="#000">
                <rect x="4" y="2" width="4.5" height="16" rx="1.5" />
                <rect x="11" y="2" width="4.5" height="16" rx="1.5" />
              </Ink>
            </TransportButton>
            <TransportButton>
              <Ink size={20} stroke="none" fill="#3f8a72">
                <path d="M3 0 L18 10 L3 20 Z" />
              </Ink>
            </TransportButton>
            <TransportButton>
              <Ink size={14} stroke="none" fill="#9f9f9f">
                <rect x="1" y="1" width="12" height="12" />
              </Ink>
            </TransportButton>
            <TransportButton>
              <Ink size={18} stroke="none" fill="#000">
                <rect x="1" y="1" width="2" height="16" />
                <path d="M16 1 V17 L4 9 Z" />
              </Ink>
            </TransportButton>
            <TransportButton>
              <Ink size={18} stroke="none" fill="#000">
                <rect x="15" y="1" width="2" height="16" />
                <path d="M2 1 V17 L14 9 Z" />
              </Ink>
            </TransportButton>
            <TransportButton $gap={8}>
              <Ink size={18} stroke="none" fill="#a32a30">
                <circle cx="9" cy="9" r="8.5" />
              </Ink>
            </TransportButton>
            <TransportButton $gap={8}>
              <LoopIcon />
            </TransportButton>
          </TransportRow>
        </Section>

        <Section $width={69} $pad={3}>
          <Gripper />
          <ToolGrid $cols={2}>
            <ToolButton $on>{TOOL_ICONS.select}</ToolButton>
            <ToolButton>{TOOL_ICONS.envelope}</ToolButton>
            <ToolButton>{TOOL_ICONS.draw}</ToolButton>
            <ToolButton>{TOOL_ICONS.multi}</ToolButton>
          </ToolGrid>
        </Section>

        <Section $width={151}>
          <Gripper $after={2} />
          <ToolGrid $cols={5}>
            <ToolButton>{TOOL_ICONS.zoomIn}</ToolButton>
            <ToolButton>{TOOL_ICONS.zoomOut}</ToolButton>
            <ToolButton>{TOOL_ICONS.zoomSel}</ToolButton>
            <ToolButton>{TOOL_ICONS.zoomFit}</ToolButton>
            <ToolButton>{TOOL_ICONS.zoomToggle}</ToolButton>
            <ToolButton>{TOOL_ICONS.trim}</ToolButton>
            <ToolButton>{TOOL_ICONS.silence}</ToolButton>
            <ToolButton $blank />
            <ToolButton>{TOOL_ICONS.undo}</ToolButton>
            <ToolButton>{TOOL_ICONS.redo}</ToolButton>
          </ToolGrid>
        </Section>

        <Section $width={89}>
          <Gripper $after={1} />
          <BigButton $width={78}>
            <svg width="34" height="26" viewBox="0 0 34 26" fill="none" stroke="#1a1a1a" strokeWidth="1.2">
              <path d="M5 10 H9 L14 6 V20 L9 16 H5 Z M16.5 10.5 C18 12 18 14 16.5 15.5 M19 8 C21.5 11 21.5 15 19 18" />
              <path d="M27 11 H33 L30 15 Z" fill="#111" stroke="none" />
            </svg>
            Audio Setup
          </BigButton>
        </Section>

        <Section $width={88}>
          <Gripper $after={2} />
          <BigButton $width={76}>
            <Ink size={26} sw={1.4}>
              <path d="M13 3 V17 M8.5 7.5 L13 3 L17.5 7.5 M4 15 V22 H22 V15" />
            </Ink>
            Share Audio
          </BigButton>
        </Section>

        <RightDock>
          <MeterRow>
            <Section $width={288} $pad={3}>
              <Gripper $after={2} />
              <MeterButton><MicIcon /></MeterButton>
              <ChannelLabels><span>L</span><span>R</span></ChannelLabels>
              <MeterScale peak />
            </Section>
            <Section $width={291} $pad={5}>
              <Gripper $after={3} />
              <MeterButton><SpeakerIcon /></MeterButton>
              <ChannelLabels><span>L</span><span>R</span></ChannelLabels>
              <MeterScale />
            </Section>
          </MeterRow>
        </RightDock>
      </Dock>

      <Ruler>
        <RulerHead>
          <svg width="15" height="13" viewBox="0 0 15 13">
            <path d="M0.5 0.5 H14.5 L7.5 12.5 Z" fill="#57c858" stroke="#333" />
          </svg>
        </RulerHead>
        <RulerScale />
      </Ruler>

      <TrackArea>
        <TrackList>
          {TRACKS.map((t) => (
            <Track key={t.id} track={t} />
          ))}
        </TrackList>
        <VScroll>
          <ArrowSlot><Chevron d="M1.5 7 L5 3 L8.5 7" /></ArrowSlot>
          <VThumb />
          <ArrowSlot><Chevron d="M1.5 3 L5 7 L8.5 3" /></ArrowSlot>
        </VScroll>
      </TrackArea>

      <HScroll>
        <Chevron d="M7 1.5 L3 5 L7 8.5" />
        <HThumb />
        <Chevron d="M3 1.5 L7 5 L3 8.5" />
      </HScroll>

      <BottomDock>
        <Section $width={173} $pad={3} $align="stretch">
          <Gripper $after={0} />
          <SnapColumn>
            <SnapLine><CheckBox />Snap</SnapLine>
            <SelectBox>
              <SelectValue>Seconds</SelectValue>
              <Ink size={12} stroke="#9a9a9a" sw={1}><path d="M2 4 L6 8 L10 4" /></Ink>
            </SelectBox>
          </SnapColumn>
        </Section>
        <Section $width={247} $pad={2}>
          <Gripper $after={2} />
          <Time segments={BIG_TIME} width={224} height={39} size={29} track={4} inset={3} indent={2} drop={9} />
        </Section>
        <Section $width={240} $pad={5}>
          <Gripper $after={8} />
          <SelectionGrid>
            <SelectionLabel>Selection</SelectionLabel>
            <Time segments={smallTime("00", "000")} width={155} height={21} size={13} track={3.6} inset={1} indent={1} drop={7} />
            <GearButton><Settings size={15} strokeWidth={1.4} color="#222" /></GearButton>
            <Time segments={smallTime("10", "610")} width={155} height={21} size={13} track={3.6} inset={1} indent={1} drop={7} />
          </SelectionGrid>
        </Section>
        <RightBottom>
          <SpeedRow>
            <Section $width={189} $pad={3}>
              <Gripper $after={4} />
              <SpeedPlay>
                <Ink size={16} stroke="none" fill="#3f8a72"><path d="M1 0 L15 8 L1 16 Z" /></Ink>
              </SpeedPlay>
              <SpeedSlider />
            </Section>
          </SpeedRow>
        </RightBottom>
      </BottomDock>

      <StatusBar>
        <StatusCell $width={172}>Stopped.</StatusCell>
        <StatusCell $width={2201} />
        <StatusCell />
      </StatusBar>

      <Taskbar>
        <StartButton><FaWindows size={17} /></StartButton>
        <TaskButton $running><PlexLogo /></TaskButton>
        <TaskButton><EdgeLogo /></TaskButton>
        <TaskButton $running><FolderLogo /></TaskButton>
        <TaskButton $running>
          <svg width="24" height="24" viewBox="0 0 24 24">
            <circle cx="12" cy="12" r="12" fill="#5865f2" />
            <g transform="translate(4.5 4.5)"><FaDiscord size={15} color="#fff" /></g>
          </svg>
        </TaskButton>
        <TaskButton $running $active><AudacityLogo size={24} /></TaskButton>
        <Tray>
          <TrayIcon><FaDiscord size={16} /></TrayIcon>
          <TrayIcon>
            <svg width="16" height="18" viewBox="0 0 16 18" fill="none" stroke="#12a5e8" strokeWidth="3">
              <path d="M8 1.6 C2.5 1.6 1.5 6 1.5 9 C1.5 13 4.5 16 8 16" />
              <path d="M7 9.5 H14.5 V17" />
            </svg>
          </TrayIcon>
          <TrayIcon>
            <svg width="16" height="18" viewBox="0 0 16 18">
              <path d="M8 0 L15 2.5 V9 C15 13 12 16 8 17.5 C4 16 1 13 1 9 V2.5 Z" fill="#fff" />
              <path d="M8 0 V17.5 M1 8.5 H15" stroke="#1a2635" strokeWidth="1" />
              <circle cx="12" cy="13.5" r="4" fill="#0f8a3c" />
              <path d="M10 13.5 L11.5 15 L14 12.5" stroke="#fff" fill="none" />
            </svg>
          </TrayIcon>
          <TrayIcon>
            <Ink size={17} stroke="#fff" sw={1}>
              <path d="M4.5 2.5 H16.5 V11.5 H4.5 M10 11.5 V15 M5 15.5 H15" />
              <rect x="0.5" y="1.5" width="4" height="4" />
            </Ink>
          </TrayIcon>
          <TrayIcon><SpeakerIcon size={20} dark="#fff" /></TrayIcon>
          <Clock>03:40<br />29/01/2024</Clock>
          <DesktopEdge />
        </Tray>
      </Taskbar>
    </Window>
  );
}
